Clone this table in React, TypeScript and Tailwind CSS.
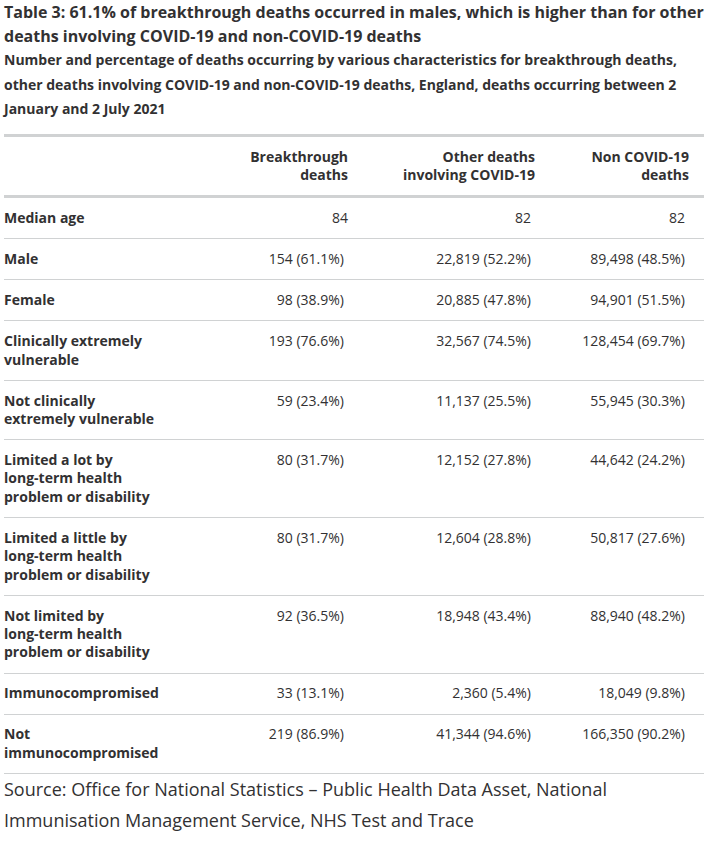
import React from "react";

type Row = { label: string; key: string; a: string; b: string; c: string; aPr?: boolean };

const rows: Row[] = [
  { key: "1", label: "Median age", a: "84", b: "82", c: "82", aPr: true },
  { key: "2", label: "Male", a: "154 (61.1%)", b: "22,819 (52.2%)", c: "89,498 (48.5%)" },
  { key: "3", label: "Female", a: "98 (38.9%)", b: "20,885 (47.8%)", c: "94,901 (51.5%)" },
  { key: "4", label: "Clinically extremely vulnerable", a: "193 (76.6%)", b: "32,567 (74.5%)", c: "128,454 (69.7%)" },
  { key: "5", label: "Not clinically extremely vulnerable", a: "59 (23.4%)", b: "11,137 (25.5%)", c: "55,945 (30.3%)" },
  { key: "6", label: "Limited a lot by\nlong-term health problem or disability", a: "80 (31.7%)", b: "12,152 (27.8%)", c: "44,642 (24.2%)" },
  { key: "7", label: "Limited a little by\nlong-term health problem or disability", a: "80 (31.7%)", b: "12,604 (28.8%)", c: "50,817 (27.6%)" },
  { key: "8", label: "Not limited by\nlong-term health problem or disability", a: "92 (36.5%)", b: "18,948 (43.4%)", c: "88,940 (48.2%)" },
  { key: "9", label: "Immunocompromised", a: "33 (13.1%)", b: "2,360 (5.4%)", c: "18,049 (9.8%)" },
  { key: "10", label: "Not immunocompromised", a: "219 (86.9%)", b: "41,344 (94.6%)", c: "166,350 (90.2%)" },
];

export default function App() {
  return (
    <div
      className="bg-white text-[#323132] pl-[4px] pr-[21px] w-[725px]"
      style={{ fontFamily: '"Open Sans", "Liberation Sans", sans-serif' }}
    >
      <h3 className="text-[16px] font-bold leading-[24px] m-0">
        Table 3: 61.1% of breakthrough deaths occurred in males, which is higher than for other deaths involving COVID-19 and non-COVID-19 deaths
      </h3>
      <p className="text-[14px] font-bold leading-[24.5px] m-0">
        Number and percentage of deaths occurring by various characteristics for breakthrough deaths, other deaths involving COVID-19 and non-COVID-19 deaths, England, deaths occurring between 2 January and 2 July 2021
      </p>
      <table className="mt-3 w-[700px] table-fixed border-collapse text-[14px] leading-[18.4px]">
        <colgroup>
          <col className="w-[176px]" />
          <col className="w-[183px]" />
          <col className="w-[187px]" />
          <col className="w-[154px]" />
        </colgroup>
        <thead>
          <tr className="border-t-[3px] border-b-[3px] border-[#d0d2d3]">
            <th className="py-[11px] pl-0 pr-[16px] text-left font-bold align-top"></th>
            <th className="py-[11px] pl-[40px] pr-[15px] text-right font-bold align-top">Breakthrough deaths</th>
            <th className="py-[11px] pl-[28px] pr-[15px] text-right font-bold align-top">
              Other deaths <span className="whitespace-nowrap">involving COVID-19</span>
            </th>
            <th className="py-[11px] pl-[20px] pr-[15px] text-right font-bold align-top">Non COVID-19 deaths</th>
          </tr>
        </thead>
        <tbody>
          {rows.map((r) => (
            <tr key={r.key} className="border-b border-[#d0d2d3]">
              <th className="py-[10.8px] pl-0 pr-[16px] text-left font-bold align-top whitespace-pre-line">{r.label}</th>
              <td className={`py-[10.8px] pl-2 text-right align-top ${r.aPr ? "pr-[15px]" : "pr-[19px]"}`}>{r.a}</td>
              <td className="py-[10.8px] pl-2 pr-[19px] text-right align-top">{r.b}</td>
              <td className="py-[10.8px] pl-2 pr-[19px] text-right align-top">{r.c}</td>
            </tr>
          ))}
        </tbody>
      </table>
      <p className="text-[18px] leading-[31.5px] m-0 pb-[12px]">
        Source: Office for National Statistics – Public Health Data Asset, National Immunisation Management Service, NHS Test and Trace
      </p>
    </div>
  );
}
